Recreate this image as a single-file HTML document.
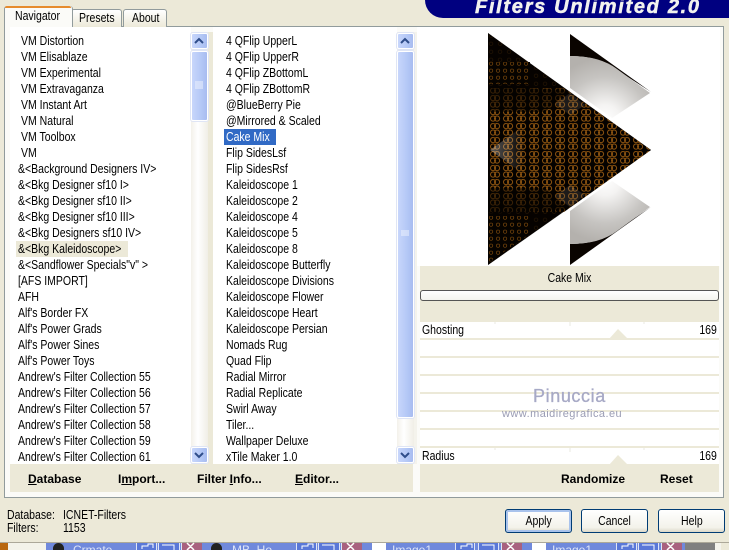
<!DOCTYPE html>
<html><head><meta charset="utf-8"><style>
html,body{margin:0;padding:0}
body{width:729px;height:550px;overflow:hidden;position:relative;background:#ece9d8;font:12.5px/16px "Liberation Sans",sans-serif;color:#000}
div,span.a{position:absolute;white-space:pre}
.l{height:16px;line-height:16px;transform:scaleX(.84);transform-origin:0 0}
.b{font-weight:bold;height:16px;line-height:16px;font-size:12px}
u{text-decoration:underline}
.sb{width:15px;border:1px solid #fff;border-radius:2px;background:linear-gradient(90deg,#c8d6fb,#b4c8f6 60%,#a8bcf0);box-shadow:0 0 0 1px #dfe5f5}
.btn{width:65px;height:22px;border:1px solid #003c74;border-radius:3px;background:linear-gradient(#fff,#f3f2ea 80%,#dcd8c8);text-align:center;line-height:22px}
.btn span{display:inline-block;transform:scaleX(.84)}
.line{left:420px;width:299px;height:2px;background:#ece9d8}
.tb{top:543px;height:7px;background:#7089dc}
.tbn{top:543px;height:7px;background:#5a78d8;border-left:1px solid #dfe6f8;border-right:1px solid #dfe6f8}
.tx{top:543px;height:7px;background:#a8617f;border-left:1px solid #dfe6f8}
.tt{top:544px;color:#dde4f8;font-size:12px;line-height:12px;height:6px;overflow:hidden}
</style></head><body>

<!-- header banner -->
<div style="left:425px;top:0;width:304px;height:18px;background:#000080;border-radius:0 0 0 18px"></div>
<div style="left:475px;top:-4px;height:22px;color:#f2f2ee;font:italic bold 20px/22px 'Liberation Sans',sans-serif;letter-spacing:1.7px;-webkit-text-stroke:.5px #f2f2ee">Filters Unlimited 2.0</div>

<!-- tab pane -->
<div style="left:4px;top:26px;width:718px;height:470px;border:1px solid #919b9c;background:#fbfbf8"></div>
<!-- tabs -->
<div style="left:71px;top:9px;width:49px;height:17px;border:1px solid #919b9c;border-bottom:0;border-radius:3px 3px 0 0;background:linear-gradient(#fff,#ece9d8)"></div>
<div style="left:123px;top:9px;width:42px;height:17px;border:1px solid #919b9c;border-bottom:0;border-radius:3px 3px 0 0;background:linear-gradient(#fff,#ece9d8)"></div>
<div style="left:4px;top:6px;width:67px;height:21px;border:1px solid #919b9c;border-bottom:0;border-top:0;border-radius:3px 3px 0 0;background:#fbfbf8"></div>
<div style="left:5px;top:6px;width:66px;height:2px;background:#e68b2c;border-radius:3px 3px 0 0"></div>
<div class="l" style="left:15px;top:8px">Navigator</div>
<div class="l" style="left:79px;top:10px">Presets</div>
<div class="l" style="left:132px;top:10px">About</div>

<!-- lists -->
<div style="left:10px;top:27px;width:181px;height:437px;background:#fff"></div>
<div style="left:208px;top:32px;width:5px;height:432px;background:#ece9d8"></div>
<div style="left:213px;top:27px;width:184px;height:437px;background:#fff"></div>
<div style="left:191px;top:32px;width:17px;height:432px;background:linear-gradient(90deg,#f3f1ea,#fff 40%,#f0eee6)"></div>
<div style="left:397px;top:32px;width:17px;height:432px;background:linear-gradient(90deg,#f3f1ea,#fff 40%,#f0eee6)"></div>
<div style="left:414px;top:32px;width:3px;height:432px;background:#f4f3ec"></div>

<!-- left scrollbar -->
<div class="sb" style="left:191px;top:33px;height:14px"></div>
<div class="sb" style="left:191px;top:51px;height:68px"></div>
<div class="sb" style="left:191px;top:447px;height:14px"></div>
<!-- mid scrollbar -->
<div class="sb" style="left:397px;top:33px;height:14px"></div>
<div class="sb" style="left:397px;top:51px;height:365px"></div>
<div class="sb" style="left:397px;top:447px;height:14px"></div>
<svg style="position:absolute;left:0;top:0" width="729" height="550" fill="none" stroke="#2f4d8a" stroke-width="2">
<path d="M195 43l4-4 4 4M401 43l4-4 4 4M195 453l4 4 4-4M401 453l4 4 4-4"/>
<path d="M195 82h8M195 84h8M195 86h8M195 88h8M401 231h8M401 233h8M401 235h8" stroke="#eef2fd" stroke-width="1"/>
</svg>

<!-- left list -->
<div class="l" style="left:21px;top:33px">VM Distortion</div>
<div class="l" style="left:21px;top:49px">VM Elisablaze</div>
<div class="l" style="left:21px;top:65px">VM Experimental</div>
<div class="l" style="left:21px;top:81px">VM Extravaganza</div>
<div class="l" style="left:21px;top:97px">VM Instant Art</div>
<div class="l" style="left:21px;top:113px">VM Natural</div>
<div class="l" style="left:21px;top:129px">VM Toolbox</div>
<div class="l" style="left:21px;top:145px">VM</div>
<div class="l" style="left:18px;top:161px">&amp;&lt;Background Designers IV&gt;</div>
<div class="l" style="left:18px;top:177px">&amp;&lt;Bkg Designer sf10 I&gt;</div>
<div class="l" style="left:18px;top:193px">&amp;&lt;Bkg Designer sf10 II&gt;</div>
<div class="l" style="left:18px;top:209px">&amp;&lt;Bkg Designer sf10 III&gt;</div>
<div class="l" style="left:18px;top:225px">&amp;&lt;Bkg Designers sf10 IV&gt;</div>
<div style="left:16px;top:241px;width:112px;height:16px;background:#ece9d8"></div>
<div class="l" style="left:18px;top:241px">&amp;&lt;Bkg Kaleidoscope&gt;</div>
<div class="l" style="left:18px;top:257px">&amp;&lt;Sandflower Specials"v" &gt;</div>
<div class="l" style="left:18px;top:273px">[AFS IMPORT]</div>
<div class="l" style="left:18px;top:289px">AFH</div>
<div class="l" style="left:18px;top:305px">Alf's Border FX</div>
<div class="l" style="left:18px;top:321px">Alf's Power Grads</div>
<div class="l" style="left:18px;top:337px">Alf's Power Sines</div>
<div class="l" style="left:18px;top:353px">Alf's Power Toys</div>
<div class="l" style="left:18px;top:369px">Andrew's Filter Collection 55</div>
<div class="l" style="left:18px;top:385px">Andrew's Filter Collection 56</div>
<div class="l" style="left:18px;top:401px">Andrew's Filter Collection 57</div>
<div class="l" style="left:18px;top:417px">Andrew's Filter Collection 58</div>
<div class="l" style="left:18px;top:433px">Andrew's Filter Collection 59</div>
<div class="l" style="left:18px;top:449px">Andrew's Filter Collection 61</div>

<!-- mid list -->
<div class="l" style="left:226px;top:33px">4 QFlip UpperL</div>
<div class="l" style="left:226px;top:49px">4 QFlip UpperR</div>
<div class="l" style="left:226px;top:65px">4 QFlip ZBottomL</div>
<div class="l" style="left:226px;top:81px">4 QFlip ZBottomR</div>
<div class="l" style="left:226px;top:97px">@BlueBerry Pie</div>
<div class="l" style="left:226px;top:113px">@Mirrored &amp; Scaled</div>
<div style="left:224px;top:129px;width:52px;height:16px;background:#316ac5"></div>
<div class="l" style="left:226px;top:129px;color:#fff">Cake Mix</div>
<div class="l" style="left:226px;top:145px">Flip SidesLsf</div>
<div class="l" style="left:226px;top:161px">Flip SidesRsf</div>
<div class="l" style="left:226px;top:177px">Kaleidoscope 1</div>
<div class="l" style="left:226px;top:193px">Kaleidoscope 2</div>
<div class="l" style="left:226px;top:209px">Kaleidoscope 4</div>
<div class="l" style="left:226px;top:225px">Kaleidoscope 5</div>
<div class="l" style="left:226px;top:241px">Kaleidoscope 8</div>
<div class="l" style="left:226px;top:257px">Kaleidoscope Butterfly</div>
<div class="l" style="left:226px;top:273px">Kaleidoscope Divisions</div>
<div class="l" style="left:226px;top:289px">Kaleidoscope Flower</div>
<div class="l" style="left:226px;top:305px">Kaleidoscope Heart</div>
<div class="l" style="left:226px;top:321px">Kaleidoscope Persian</div>
<div class="l" style="left:226px;top:337px">Nomads Rug</div>
<div class="l" style="left:226px;top:353px">Quad Flip</div>
<div class="l" style="left:226px;top:369px">Radial Mirror</div>
<div class="l" style="left:226px;top:385px">Radial Replicate</div>
<div class="l" style="left:226px;top:401px">Swirl Away</div>
<div class="l" style="left:226px;top:417px">Tiler...</div>
<div class="l" style="left:226px;top:433px">Wallpaper Deluxe</div>
<div class="l" style="left:226px;top:449px">xTile Maker 1.0</div>

<!-- bottom-left bar -->
<div style="left:10px;top:464px;width:403px;height:28px;background:#ece9d8"></div>
<div class="b" style="left:28px;top:471px"><u>D</u>atabase</div>
<div class="b" style="left:118px;top:471px">I<u>m</u>port...</div>
<div class="b" style="left:197px;top:471px">Filter <u>I</u>nfo...</div>
<div class="b" style="left:295px;top:471px"><u>E</u>ditor...</div>

<!-- preview -->
<div style="left:417px;top:27px;width:303px;height:239px;background:#fff"></div>
<svg style="position:absolute;left:420px;top:30px" width="300" height="240" viewBox="420 30 300 240">
<defs>
<pattern id="p" width="13" height="14" patternUnits="userSpaceOnUse" x="488" y="38">
<rect width="13" height="14" fill="#050200"/>
<path d="M5 1.5a2.6 2.6 0 1 0 .1 0M9 1.5a2.6 2.6 0 1 0 .1 0M5 8a2.6 2.6 0 1 0 .1 0M9 8a2.6 2.6 0 1 0 .1 0" fill="none" stroke="#8a5210" stroke-width="1"/>
</pattern>
<pattern id="q" width="9" height="8" patternUnits="userSpaceOnUse" x="488" y="33">
<rect width="9" height="8" fill="#060300"/>
<path d="M3 1a1.8 1.8 0 1 0 .1 0" fill="none" stroke="#3a2005" stroke-width=".8"/>
</pattern>
<pattern id="r" width="7" height="7" patternUnits="userSpaceOnUse" x="488" y="33">
<rect width="7" height="7" fill="#060300"/>
<path d="M3 1a1.7 1.7 0 1 0 .1 0" fill="none" stroke="#6e410b" stroke-width=".8"/>
</pattern>
<radialGradient id="g1" gradientUnits="userSpaceOnUse" cx="605" cy="120" r="62">
<stop offset="0" stop-color="#fff"/><stop offset=".25" stop-color="#f4f3f2"/><stop offset=".7" stop-color="#c6c4c1"/><stop offset="1" stop-color="#b4b1ad"/>
</radialGradient>
<radialGradient id="g2" gradientUnits="userSpaceOnUse" cx="605" cy="180" r="62">
<stop offset="0" stop-color="#fff"/><stop offset=".25" stop-color="#f4f3f2"/><stop offset=".7" stop-color="#c6c4c1"/><stop offset="1" stop-color="#b4b1ad"/>
</radialGradient>
<linearGradient id="g3" gradientUnits="userSpaceOnUse" x1="490" y1="150" x2="525" y2="150">
<stop offset="0" stop-color="#fff" stop-opacity=".34"/><stop offset="1" stop-color="#fff" stop-opacity="0"/>
</linearGradient>
<linearGradient id="fade" gradientUnits="userSpaceOnUse" x1="0" y1="85" x2="0" y2="112">
<stop offset="0" stop-color="#050200" stop-opacity="1"/><stop offset="1" stop-color="#050200" stop-opacity="0"/>
</linearGradient>
<linearGradient id="fade2" gradientUnits="userSpaceOnUse" x1="0" y1="215" x2="0" y2="188">
<stop offset="0" stop-color="#050200" stop-opacity="1"/><stop offset="1" stop-color="#050200" stop-opacity="0"/>
</linearGradient>
</defs>
<path d="M488 33L651 150 488 265Z" fill="url(#q)"/>
<path d="M488 88L564 88 651 150 564 212 488 212Z" fill="url(#p)"/>
<path d="M488 85L568 91 545 112 488 112ZM488 215L568 209 545 188 488 188Z" fill="#050200" opacity=".45"/>
<path d="M488 33L612 122 488 122Z" fill="url(#fade)" opacity=".5"/>
<path d="M488 265L612 178 488 178Z" fill="url(#fade2)" opacity=".5"/>
<path d="M489 62L530 62 530 84 489 84ZM489 216L530 216 530 234 489 262Z" fill="url(#r)"/>
<path d="M490 150L518 130 528 150 518 170Z" fill="url(#g3)"/>
<path d="M570 93L555 104 570 115 585 105ZM570 207L555 196 570 185 585 195Z" fill="#fff" opacity=".1"/>
<path d="M570 34L651 92 617 70Q600 56 570 56Z" fill="#0a0400"/>
<path d="M570 56Q600 56 617 69L650 93 612 118 570 88Z" fill="url(#g1)"/>
<path d="M570 265L651 207 617 230Q600 244 570 244Z" fill="#0a0400"/>
<path d="M570 244Q600 244 617 231L650 207 612 181 570 211Z" fill="url(#g2)"/>
</svg>

<!-- controls right -->
<div style="left:420px;top:266px;width:299px;height:56px;background:#ece9d8"></div>
<div class="l" style="left:420px;top:270px;width:299px;text-align:center;transform-origin:50% 0">Cake Mix</div>
<div style="left:420px;top:290px;width:297px;height:9px;border:1px solid #555;border-radius:3px;background:linear-gradient(#fff,#f4f4ee)"></div>
<div style="left:420px;top:322px;width:299px;height:142px;background:#fff"></div>
<div class="line" style="top:338px"></div>
<div class="line" style="top:356px"></div>
<div class="line" style="top:374px"></div>
<div class="line" style="top:392px"></div>
<div class="line" style="top:410px"></div>
<div class="line" style="top:428px"></div>
<div class="line" style="top:446px"></div>
<svg style="position:absolute;left:0;top:0" width="729" height="550" fill="#ece9d8">
<path d="M609 339L618 329 628 339ZM609 465L618 455 628 465Z"/>
<path d="M495 322v2M570 322v4M644 322v2M495 448v2M570 448v4M644 448v2" stroke="#e8e8e0"/>
</svg>
<div class="l" style="left:422px;top:322px">Ghosting</div>
<div class="l" style="right:12px;top:322px;transform-origin:100% 0">169</div>
<div class="l" style="left:422px;top:448px">Radius</div>
<div class="l" style="right:12px;top:448px;transform-origin:100% 0">169</div>
<div style="left:533px;top:383px;height:26px;line-height:26px;font-size:18px;color:#a7a9c6;letter-spacing:.6px;-webkit-text-stroke:.3px #a7a9c6">Pinuccia</div>
<div style="left:502px;top:407px;height:14px;line-height:14px;font-size:11px;color:#9a9cb4;letter-spacing:.45px">www.maidiregrafica.eu</div>

<div style="left:420px;top:464px;width:299px;height:28px;background:#ece9d8"></div>
<div class="b" style="left:561px;top:471px">Randomize</div>
<div class="b" style="left:660px;top:471px">Reset</div>

<!-- footer -->
<div class="l" style="left:7px;top:507px">Database:</div>
<div class="l" style="left:63px;top:507px">ICNET-Filters</div>
<div class="l" style="left:7px;top:520px">Filters:</div>
<div class="l" style="left:63px;top:520px">1153</div>

<div class="btn" style="left:505px;top:509px;box-shadow:inset 0 0 0 2px #a9c3ec"><span>Apply</span></div>
<div class="btn" style="left:581px;top:509px"><span>Cancel</span></div>
<div class="btn" style="left:658px;top:509px"><span>Help</span></div>

<!-- taskbar -->
<div style="left:0;top:542px;width:729px;height:1px;background:#aca899"></div>
<div style="left:0;top:543px;width:8px;height:7px;background:#b9670f"></div>
<div style="left:8px;top:543px;width:38px;height:7px;background:#f4f3ea"></div>
<div class="tb" style="left:46px;width:639px"></div>
<div class="tbn" style="left:136px;width:19px"></div><div class="tbn" style="left:158px;width:20px"></div><div class="tx" style="left:181px;width:20px"></div>
<div class="tbn" style="left:296px;width:19px"></div><div class="tbn" style="left:318px;width:20px"></div><div class="tx" style="left:341px;width:20px"></div>
<div class="tbn" style="left:455px;width:18px"></div><div class="tbn" style="left:478px;width:19px"></div><div class="tx" style="left:501px;width:20px"></div>
<div class="tbn" style="left:616px;width:19px"></div><div class="tbn" style="left:638px;width:19px"></div><div class="tx" style="left:661px;width:20px"></div>
<div style="left:685px;top:543px;width:30px;height:7px;background:#808080"></div>
<div style="left:715px;top:543px;width:6px;height:7px;background:#f4f3ec"></div>
<div style="left:53px;top:543px;width:11px;height:7px;border-radius:6px 6px 0 0;background:#222"></div>
<div style="left:211px;top:543px;width:11px;height:7px;border-radius:6px 6px 0 0;background:#222"></div>
<div style="left:372px;top:543px;width:14px;height:7px;background:#fff"></div>
<div style="left:532px;top:543px;width:14px;height:7px;background:#fff"></div>
<div class="tt" style="left:73px">Crmate</div>
<div class="tt" style="left:232px">MB_Ho</div>
<div class="tt" style="left:392px">Image1</div>
<div class="tt" style="left:552px">Image1</div>
<svg style="position:absolute;left:0;top:0" width="729" height="550" fill="none" stroke="#fff">
<path d="M142 549v-3h6v-2h5v4M162 545h12v5M302 549v-3h6v-2h5v4M322 545h12v5M461 549v-3h6v-2h5v4M482 545h12v5M622 549v-3h6v-2h5v4M642 545h12v5"/>
<path d="M187 543l7 7M194 543l-7 7M347 543l7 7M354 543l-7 7M507 543l7 7M514 543l-7 7M667 543l7 7M674 543l-7 7" stroke-width="1.5"/>
</svg>
</body></html>
